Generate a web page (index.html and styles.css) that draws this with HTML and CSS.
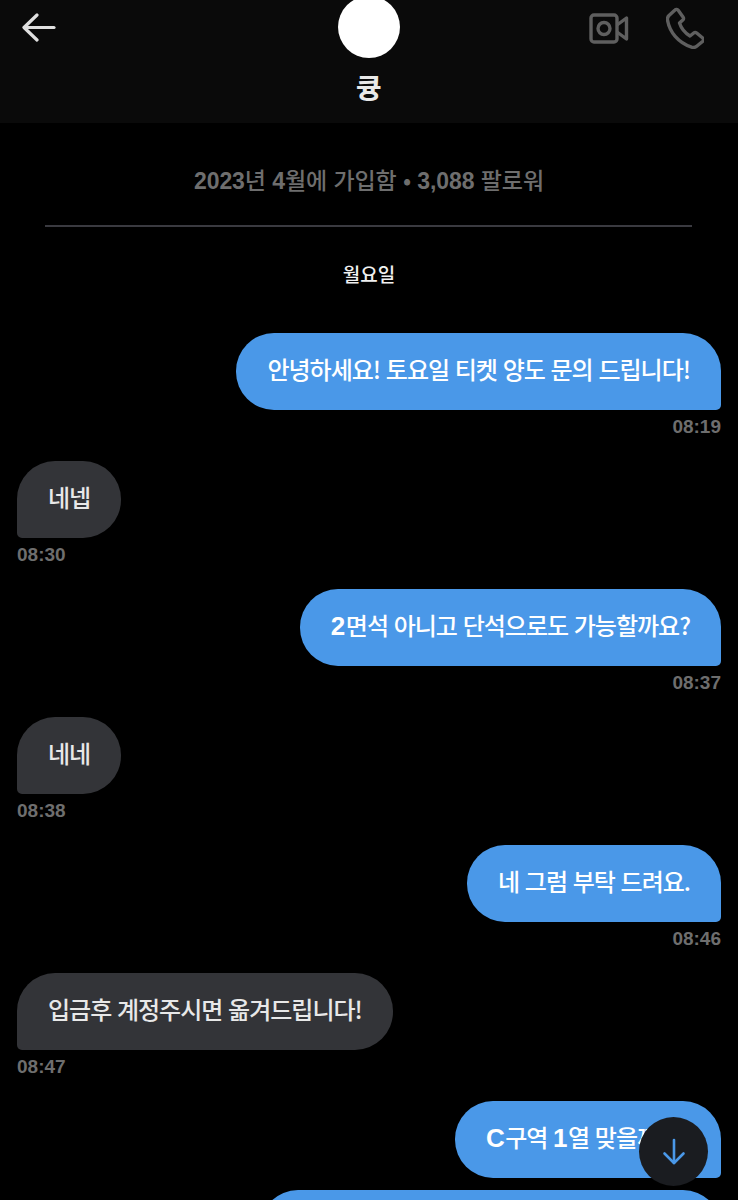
FILE: index.html
```html
<!DOCTYPE html>
<html lang="ko">

<head>
   <meta charset="UTF-8">
   <meta name="viewport" content="width=device-width, initial-scale=1.0">
   <title>큥</title>

   <link rel="stylesheet" href="styles.css">
</head>

<body>
   <div class="chat">
      <div class="header">
         <svg class="back__icon" viewBox="0 0 34 30" fill="none" stroke="#e0e0e0" stroke-width="3.2" stroke-linecap="round" stroke-linejoin="round">
            <path d="M15 2 2 14.500 15 27"/>
            <path d="M2.500 14.500H32"/>
         </svg>

         <div class="header__center">
            <div class="avatar"></div>
            <div class="name">큥</div>
         </div>

         <div class="header__icons">
            <svg class="video__icon" viewBox="0 0 40 32" fill="none" stroke="#5f5f5f" stroke-width="3.4" stroke-linejoin="round">
               <rect x="2" y="3" width="26" height="27" rx="3"/>
               <circle cx="15" cy="16.500" r="6"/>
               <path d="M28 13 37.500 6V27L28 20"/>
            </svg>
            <svg class="phone__icon" viewBox="0 0 38 42" fill="none" stroke="#5f5f5f" stroke-width="3.4" stroke-linejoin="round">
               <path d="M3 8.500 9 3c1-1 2.400-.8 3.200.3l4.800 6.700c.7 1 .6 2.200-.2 3l-3.300 3c1.800 5.500 5.500 10 10.500 13l3.700-3c.9-.7 2.100-.7 3 0l6 5c1 .9 1 2.300.1 3.200L31 39c-1.500 1.400-3.500 1.800-5.400 1.200C12 35.500 3.500 25 1.500 13c-.3-1.700.3-3.300 1.500-4.500Z"/>
            </svg>
         </div>
      </div>

      <div class="meta"><b class="num">2023</b>년 <b class="num">4</b>월에 가입함 • <b class="num">3,088</b> 팔로워</div>
      <div class="divider"></div>
      <div class="day">월요일</div>

      <div class="messages">
         <div class="row row--me">
            <div class="bubble bubble--me">안녕하세요! 토요일 티켓 양도 문의 드립니다!</div>
            <div class="time">08:19</div>
         </div>
         <div class="row">
            <div class="bubble bubble--them">네넵</div>
            <div class="time">08:30</div>
         </div>
         <div class="row row--me">
            <div class="bubble bubble--me"><b class="num">2</b>면석 아니고 단석으로도 가능할까요?</div>
            <div class="time">08:37</div>
         </div>
         <div class="row">
            <div class="bubble bubble--them">네네</div>
            <div class="time">08:38</div>
         </div>
         <div class="row row--me">
            <div class="bubble bubble--me">네 그럼 부탁 드려요.</div>
            <div class="time">08:46</div>
         </div>
         <div class="row">
            <div class="bubble bubble--them">입금후 계정주시면 옮겨드립니다!</div>
            <div class="time">08:47</div>
         </div>
         <div class="row row--me row--short">
            <div class="bubble bubble--me"><b class="num">C</b>구역 <b class="num">1</b>열 맞을까요?</div>
         </div>
         <div class="row row--me">
            <div class="bubble bubble--me bubble--cut"></div>
         </div>
      </div>

      <div class="scroll__button">
         <svg class="down__icon" viewBox="0 0 24 28" fill="none" stroke="#4a98e8" stroke-width="2.6" stroke-linecap="round" stroke-linejoin="round">
            <path d="M12 2V25"/>
            <path d="M2.500 15.500 12 25l9.500-9.500"/>
         </svg>
      </div>
   </div>
</body>

</html>
```

FILE: styles.css
```css
* {
   font-family: "Noto Sans CJK KR", "Liberation Sans", sans-serif;
   box-sizing: border-box;
   padding: 0;
   margin: 0;
}

html,
body {
   height: 100%;
   overflow: hidden;
}

body {
   background-color: #000;
   color: #fff;
}

.chat {
   position: relative;
   height: 1200px;
   overflow: hidden;
}

.header {
   height: 123px;
   background-color: #0a0a0a;
   display: grid;
   grid-template-columns: 1fr auto 1fr;
   align-items: start;
   padding: 0 22px;
}

.back__icon {
   width: 34px;
   height: 30px;
   margin-top: 13px;
}

.header__center {
   display: flex;
   flex-direction: column;
   align-items: center;
}

.avatar {
   width: 62px;
   height: 62px;
   margin-top: -4px;
   border-radius: 50%;
   background-color: #fff;
}

.name {
   margin-top: 11px;
   font-size: 28px;
   line-height: 36px;
   font-weight: 700;
   color: #e8e8e8;
}

.header__icons {
   display: flex;
   justify-content: flex-end;
   align-items: flex-start;
   gap: 37px;
   padding-right: 12px;
}

.video__icon {
   width: 40px;
   height: 32px;
   margin-top: 12px;
}

.phone__icon {
   width: 38px;
   height: 42px;
   margin-top: 7px;
}

.num {
   font-family: "Liberation Sans", sans-serif;
   font-weight: 700;
}

.meta {
   margin-top: 41px;
   height: 30px;
   line-height: 30px;
   text-align: center;
   font-size: 23px;
   letter-spacing: -0.1px;
   font-weight: 500;
   color: #6e6e6e;
}

.divider {
   height: 2px;
   margin: 31px 46px 0 45px;
   background-color: #3a3a40;
}

.day {
   margin-top: 32px;
   height: 30px;
   line-height: 30px;
   text-align: center;
   font-size: 19px;
   font-weight: 500;
   color: #f0f0f0;
}

.messages {
   margin-top: 44px;
   padding: 0 17px;
   display: flex;
   flex-direction: column;
}

.row {
   height: 128px;
   display: flex;
   flex-direction: column;
   align-items: flex-start;
}

.row--me {
   align-items: flex-end;
}

.row--short {
   height: 89px;
}

.bubble {
   height: 77px;
   line-height: 71px;
   padding: 0 31px;
   font-size: 24px;
   font-weight: 500;
   letter-spacing: -1px;
   white-space: nowrap;
   border-radius: 38px;
}

.bubble .num {
   font-size: 26px;
   margin-right: 1.5px;
}

.bubble--me {
   background-color: #4a98e8;
   color: #fff;
   border-bottom-right-radius: 5px;
}

.bubble--them {
   background-color: #333438;
   color: #e8e8e8;
   border-bottom-left-radius: 5px;
}

.bubble--cut {
   width: 461px;
}

.time {
   margin-top: 6px;
   height: 22px;
   line-height: 22px;
   font-family: "Liberation Sans", sans-serif;
   font-size: 19px;
   font-weight: 700;
   color: #6e6e6e;
}

.scroll__button {
   position: absolute;
   left: 639px;
   top: 1117px;
   width: 69px;
   height: 69px;
   border-radius: 50%;
   background-color: #1a1c20;
   display: flex;
   align-items: center;
   justify-content: center;
}

.down__icon {
   width: 24px;
   height: 28px;
}
```
